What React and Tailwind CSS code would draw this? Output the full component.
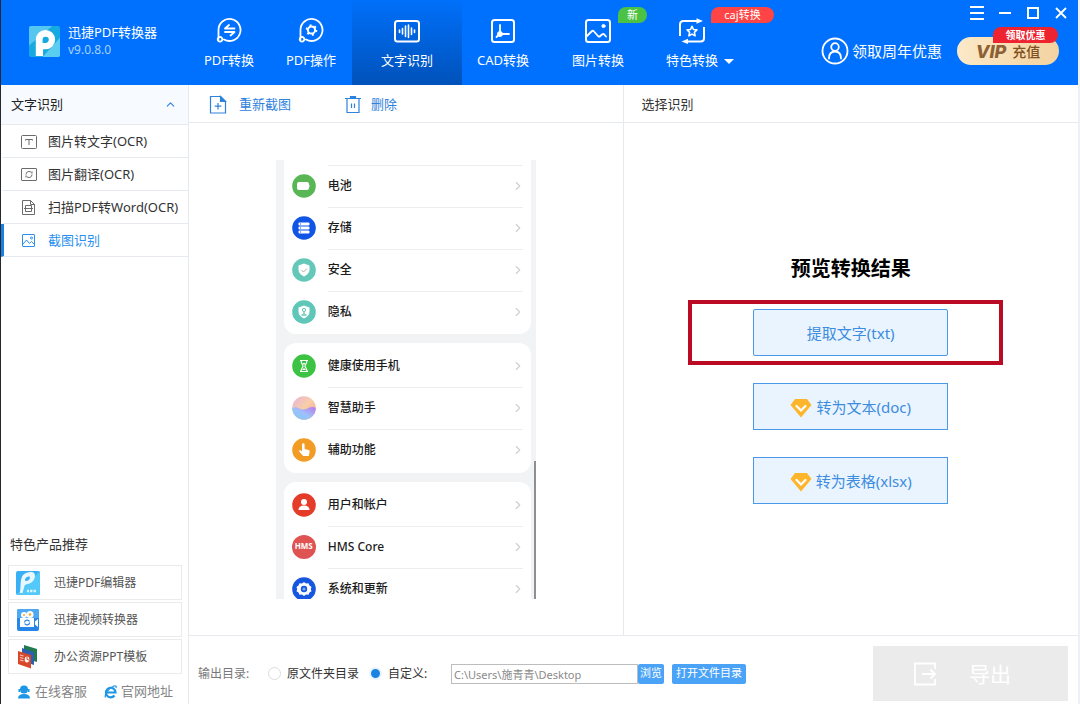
import { useState } from 'react'
import { ChevronUp, ChevronRight } from 'lucide-react'

const Svg = ({ size = 26, children, className = '' }) => (
  <svg
    width={size}
    height={size}
    viewBox="0 0 26 26"
    fill="none"
    stroke="currentColor"
    strokeWidth="2"
    strokeLinecap="round"
    strokeLinejoin="round"
    className={`shrink-0 ${className}`}
    aria-hidden="true"
  >
    {children}
  </svg>
)

const ConvertIcon = () => (
  <Svg>
    <path strokeWidth="1.800" d="M2.500 21V12A11 11 0 1 1 8 21.500M2.500 19.500a2.300 2.300 0 1 0 3 0c-.6-.6-2-.8-3 0z" />
    <path strokeWidth="1.800" d="M18.500 10.500H9l4-3.500M9 14h9.500l-4 3.500" />
  </Svg>
)

const OperateIcon = () => (
  <Svg>
    <path strokeWidth="1.800" d="M2.500 21V12A11 11 0 1 1 8 21.500M2.500 19.500a2.300 2.300 0 1 0 3 0c-.6-.6-2-.8-3 0z" />
    <circle cx="13.500" cy="12" r="3.600" />
    <circle cx="13.500" cy="12" r="5" strokeDasharray="2 3.236" strokeLinecap="butt" strokeWidth="1.600" />
  </Svg>
)

const OcrIcon = () => (
  <Svg>
    <rect x="1" y="3" width="24" height="20.500" rx="2.500" />
    <path strokeWidth="1.600" d="M5.500 12v2.500M8.500 10.500v5.500M11.500 8v10.500M14.500 7v12.500M17.500 10v6.500M20.500 12v2.500" />
  </Svg>
)

const CadIcon = () => (
  <Svg>
    <rect x="2" y="2" width="22" height="22" rx="2.500" />
    <path strokeWidth="1.800" d="M10 7v9h9M6.500 19l3-3" />
    <circle cx="10" cy="16" r="2.500" fill="currentColor" strokeWidth="1" />
  </Svg>
)

const ImageIcon = () => (
  <Svg>
    <rect x="1" y="2" width="24" height="22" rx="2.500" />
    <path d="M2 18l4.500-4.500c1-1 1.700-1 2.500 0l4 4.500c.8.800 1.500.800 2.300 0l1.700-1.500c.8-.7 1.600-.7 2.300 0l1.700 2" strokeWidth="1.800" />
    <circle cx="18.500" cy="8" r="1.600" fill="currentColor" strokeWidth="1" />
  </Svg>
)

const SpecialIcon = () => (
  <Svg>
    <path strokeLinecap="butt" d="M1 18V6.500Q1 3 4.500 3H19M25 9v11.500Q25 23.500 21.500 23.500H7" />
    <path d="M17.500.300L24 3l-6.500 2.700zM9 20.800l-6.500 2.700L9 26z" fill="currentColor" stroke="none" />
    <path strokeWidth="1.600" d="M13 8.300l1.500 3.200 3.400.4-2.500 2.400.7 3.500-3.100-1.700-3.100 1.700.7-3.500-2.500-2.400 3.400-.4z" />
  </Svg>
)

const navItems = [
  { label: 'PDF转换', icon: ConvertIcon, width: 'w-[82px]' },
  { label: 'PDF操作', icon: OperateIcon, width: 'w-[82px]' },
  { label: '文字识别', icon: OcrIcon, width: 'w-[110px]' },
  { label: 'CAD转换', icon: CadIcon, width: 'w-[82px]' },
  { label: '图片转换', icon: ImageIcon, width: 'w-[108px]', badge: '新', badgeClass: 'bg-[#4cc244] left-[74px] w-[29px]' },
  { label: '特色转换', icon: SpecialIcon, width: 'w-20', badge: 'caj转换', badgeClass: 'bg-[#fe4444] left-[59px] w-[63px]' },
]

const TextImageIcon = () => (
  <svg width="16" height="16" viewBox="0 0 16 16" fill="none" stroke="#6b6b6b" aria-hidden="true">
    <rect x=".5" y="1.500" width="15" height="13" rx="1" />
    <path d="M4.500 6.500v-1h7v1M8 5.500V11" />
  </svg>
)

const TranslateIcon = () => (
  <svg width="16" height="16" viewBox="0 0 16 16" fill="none" stroke="#6b6b6b" aria-hidden="true">
    <rect x=".5" y="1.500" width="15" height="12" rx=".5" />
    <path d="M5 7.500a3 3 0 0 1 5.500-1.700M11 7.500a3 3 0 0 1-5.500 1.700M11 4.500v2M5 10.500v-2" />
  </svg>
)

const ScanIcon = () => (
  <svg width="16" height="16" viewBox="0 0 16 16" fill="none" stroke="#6b6b6b" aria-hidden="true">
    <path d="M1.500.500h8l4 4v10h-12zM9.500.500v4h4" />
    <path d="M4.500 5.500h6v6h-6zM3 8.500h9" />
  </svg>
)

const ShotIcon = () => (
  <svg width="16" height="16" viewBox="0 0 16 16" fill="none" stroke="currentColor" aria-hidden="true">
    <rect x="1.500" y="1.500" width="12" height="12" rx=".5" />
    <path d="M2 11l3.500-4 3 3.500 2-2 3 3" />
    <circle cx="10.500" cy="5" r="1" />
  </svg>
)

const sideItems = [
  { label: '图片转文字(OCR)', icon: TextImageIcon },
  { label: '图片翻译(OCR)', icon: TranslateIcon },
  { label: '扫描PDF转Word(OCR)', icon: ScanIcon },
  { label: '截图识别', icon: ShotIcon },
]

const EditorLogo = () => (
  <svg width="26" height="26" viewBox="0 0 26 26" aria-hidden="true">
    <rect x="1" y="1" width="24" height="24" rx="2" fill="#39b0f5" />
    <path d="M1 25L25 1v22a2 2 0 0 1-2 2z" fill="#54c8f8" />
    <path fillRule="evenodd" fill="#e9f8ff" d="M5 23C6 15 5 9 8 5c3-3 9-4 11-2 2.500 3 0 10-6 11-2 .5-3 .5-3.500 2L7.500 23zM12 7c-2 1-2.500 3-1.500 4 2 .5 4.500-1.500 4.500-3.500C15 6 13 6.500 12 7z" />
    <path d="M12 21h2m1 0h2.500m1 0h2.500" stroke="#d9f3ff" strokeWidth="2.500" />
  </svg>
)

const VideoLogo = () => (
  <svg width="26" height="26" viewBox="0 0 26 26" aria-hidden="true">
    <rect x="2" y="2" width="22" height="22" rx="2" fill="#2585e8" />
    <path d="M2 4a2 2 0 0 1 2-2h18a2 2 0 0 1 2 2v7H2z" fill="#4ea9f2" />
    <circle cx="9" cy="8" r="3" fill="#fff" />
    <circle cx="15" cy="7.500" r="3.500" fill="#fff" />
    <circle cx="15" cy="7.500" r="1.300" fill="#f6a531" />
    <circle cx="9" cy="8" r="1" fill="#f6a531" />
    <path d="M5 11h14v9H5zM20 14.500l3-2.500v8l-3-2.500z" fill="#fff" />
    <path d="M9.500 15.500a2.700 2.700 0 0 1 5-1M14.700 15.500a2.700 2.700 0 0 1-5 1" fill="none" stroke="#2585e8" strokeWidth="1.300" />
  </svg>
)

const PptLogo = () => (
  <svg width="26" height="26" viewBox="0 0 26 26" aria-hidden="true">
    <path d="M9 1l13 4v13L9 14z" fill="#1f7a4d" />
    <path d="M7 4l12 4v13L7 17z" fill="#2c5fae" />
    <path d="M3 7l13 4v13.500L3 20z" fill="#d9472b" />
    <path d="M5 11l3.500 1M5 13.500l3.500 1M5 16l3.500 1" stroke="#f7c6b8" strokeWidth="1.300" />
    <ellipse cx="12" cy="15.500" rx="2.300" ry="3" fill="#fff" />
    <path d="M12 12.500v3l2 .5" stroke="#d9472b" fill="none" />
  </svg>
)

const products = [
  { label: '迅捷PDF编辑器', icon: EditorLogo },
  { label: '迅捷视频转换器', icon: VideoLogo },
  { label: '办公资源PPT模板', icon: PptLogo },
]

const Disc = ({ color, children }) => (
  <svg width="24" height="24" viewBox="0 0 24 24" className="shrink-0" aria-hidden="true">
    <circle cx="12" cy="12" r="11.800" fill={color} />
    {children}
  </svg>
)

const BatteryDisc = () => (
  <Disc color="#59b655">
    <rect x="5" y="8" width="12" height="8" rx="2" fill="#fff" />
    <path d="M17.500 10.500q1.500 1.500 0 3z" fill="#fff" />
  </Disc>
)

const StorageDisc = () => (
  <Disc color="#1155e6">
    <rect x="6.500" y="6.500" width="11" height="3" rx="1" fill="#fff" />
    <rect x="6.500" y="10.500" width="11" height="3" rx="1" fill="#fff" />
    <rect x="6.500" y="14.500" width="11" height="3" rx="1" fill="#fff" />
    <path d="M8 8h1M8 12h1M8 16h1" stroke="#1155e6" />
  </Disc>
)

const ShieldDisc = () => (
  <Disc color="#64c8b9">
    <path d="M12 5.500l5.500 2v4.500c0 3-2.500 5-5.500 6.500-3-1.500-5.500-3.500-5.500-6.500V7.500z" fill="#fff" />
    <path d="M9.500 12l2 2 3.500-3.500" stroke="#b5aaa8" fill="none" />
  </Disc>
)

const PrivacyDisc = () => (
  <Disc color="#5fc6b8">
    <path d="M12 5.500l5.500 2v4.500c0 3-2.500 5-5.500 6.500-3-1.500-5.500-3.500-5.500-6.500V7.500z" fill="#fff" />
    <circle cx="12" cy="10" r="1.600" fill="none" stroke="#5fc6b8" />
    <path d="M12 11.500v2.500M9.500 15h5" stroke="#5fc6b8" strokeWidth="1.300" />
  </Disc>
)

const HealthDisc = () => (
  <Disc color="#3cc343">
    <path d="M8 6.500h8M8 17.500h8M9 6.500c0 3 2 4 2 5.500s-2 2.500-2 5.500M15 6.500c0 3-2 4-2 5.500s2 2.500 2 5.500" stroke="#fff" strokeWidth="1.200" fill="none" />
    <path d="M10.500 9h3L12 11zM10 16l2-2 2 2z" fill="#fff" />
  </Disc>
)

const AssistDisc = () => (
  <svg width="24" height="24" viewBox="0 0 24 24" className="shrink-0" aria-hidden="true">
    <defs>
      <linearGradient id="orbTop" x1="0" y1="0" x2="1" y2="1">
        <stop offset="0" stopColor="#e8b3dc" />
        <stop offset=".5" stopColor="#f8cfa8" />
        <stop offset="1" stopColor="#f49a96" />
      </linearGradient>
      <linearGradient id="orbBottom" x1="1" y1="0" x2="0" y2="1">
        <stop offset="0" stopColor="#b877ee" />
        <stop offset=".5" stopColor="#9fc0fb" />
        <stop offset="1" stopColor="#79cbf5" />
      </linearGradient>
    </defs>
    <circle cx="12" cy="12" r="11.800" fill="url(#orbTop)" />
    <path d="M.2 12c5-3 8 3 14 1 4-1.500 6-3 9.600-1A11.800 11.800 0 0 1 .2 12z" fill="url(#orbBottom)" />
  </svg>
)

const TouchDisc = () => (
  <Disc color="#f29c26">
    <path d="M10 6.500a1.300 1.300 0 0 1 2.600 0V11l4 1c1 .3 1.200 1 1 2l-.8 4h-5.600l-4-4.500c-.6-.9.500-1.800 1.500-1l1.300 1z" fill="#fff" />
  </Disc>
)

const UserDisc = () => (
  <Disc color="#e43c28">
    <circle cx="12" cy="9" r="3" fill="#fff" />
    <path d="M6.500 17c0-3 2-4.500 5.500-4.500s5.500 1.500 5.500 4.500z" fill="#fff" />
  </Disc>
)

const HmsDisc = () => (
  <span className="flex size-6 shrink-0 items-center justify-center rounded-full bg-[#e05353] text-[8px] font-bold text-white">
    HMS
  </span>
)

const SystemDisc = () => (
  <Disc color="#1557e0">
    <path d="M12 5l2 1.500 2.500-.3 1 2.300 2 1.500-.7 2 .7 2.200-2 1.300-1 2.300-2.500-.3L12 19l-2-1.500-2.500.3-1-2.300-2-1.300.7-2.200-.7-2 2-1.500 1-2.300 2.500.3z" fill="#fff" />
    <circle cx="12" cy="12" r="3.200" fill="#1557e0" />
    <circle cx="12" cy="12" r="1.600" fill="#7fa6f3" />
  </Disc>
)

const phoneGroups = [
  [
    { label: '电池', icon: BatteryDisc },
    { label: '存储', icon: StorageDisc },
    { label: '安全', icon: ShieldDisc },
    { label: '隐私', icon: PrivacyDisc },
  ],
  [
    { label: '健康使用手机', icon: HealthDisc },
    { label: '智慧助手', icon: AssistDisc },
    { label: '辅助功能', icon: TouchDisc },
  ],
  [
    { label: '用户和帐户', icon: UserDisc },
    { label: 'HMS Core', icon: HmsDisc },
    { label: '系统和更新', icon: SystemDisc },
  ],
]

const Gem = () => (
  <svg width="22" height="20" viewBox="0 0 22 20" className="mr-1 shrink-0" aria-hidden="true">
    <path d="M5 1h12l4.500 6L11 19.500.500 7z" fill="#fdb62b" />
    <path d="M6.500 8l4.500 4.500L15.500 8" fill="none" stroke="#fff" strokeWidth="2.200" strokeLinecap="round" />
  </svg>
)

function Header() {
  return (
    <header className="flex h-[85px] shrink-0 bg-[#0071ff] text-white">
      <div className="flex w-[187px] shrink-0 items-center pb-[3px] pl-7">
        <svg width="31" height="31" viewBox="0 0 32 32" aria-hidden="true">
          <rect width="32" height="32" rx="2" fill="#17a9e0" />
          <path d="M0 2a2 2 0 0 1 2-2h22L0 20z" fill="#55c6f0" />
          <path d="M32 12v18a2 2 0 0 1-2 2H14z" fill="#5bcdf0" />
          <path fillRule="evenodd" fill="#fff" d="M7 31V14a10 10 0 1 1 10 10H14.500V31zM14 17.500h2.500a3.200 3.200 0 1 0-2.500-3z" />
          <circle cx="17" cy="14.500" r="1.800" fill="#17a9e0" />
        </svg>
        <div className="ml-2 text-[13px] leading-[18px]">
          <h1>迅捷PDF转换器</h1>
          <p className="text-xs leading-[18px] text-[#a5d2ff]">v9.0.8.0</p>
        </div>
      </div>

      <nav className="flex shrink-0">
        {navItems.map(({ label, icon: Icon, width, badge, badgeClass }, i) => (
          <button
            key={label}
            type="button"
            className={`relative flex flex-col items-center gap-1.5 pt-[18px] text-[13px] leading-5 ${width} ${
              i === 2 ? 'bg-linear-to-b from-[#0070fa] to-[#0052ba]' : ''
            }`}
          >
            <Icon />
            <span>{label}</span>
            {badge && (
              <span className={`absolute top-[7px] rounded-tl-lg rounded-r-lg text-[11px] leading-4 ${badgeClass}`}>
                {badge}
              </span>
            )}
          </button>
        ))}
        <button type="button" aria-label="更多" className="-ml-2 flex items-end pb-[18px]">
          <svg width="10" height="10" viewBox="0 0 10 10" aria-hidden="true">
            <path d="M0 2h10L5 7z" fill="#fff" />
          </svg>
        </button>
      </nav>

      <div className="ml-auto flex shrink-0 flex-col items-end pr-[10px]">
        <div className="flex h-[26px] items-center gap-[14px]">
          <button type="button" aria-label="菜单">
            <svg width="14" height="14" viewBox="0 0 14 14" stroke="#fff" strokeWidth="2">
              <path d="M0 1h14M0 7h14M0 13h14" />
            </svg>
          </button>
          <button type="button" aria-label="最小化">
            <svg width="14" height="14" viewBox="0 0 14 14" stroke="#fff" strokeWidth="2">
              <path d="M1 7h12" />
            </svg>
          </button>
          <button type="button" aria-label="最大化">
            <svg width="14" height="14" viewBox="0 0 14 14" fill="none" stroke="#fff" strokeWidth="2">
              <rect x="2" y="2" width="10" height="10" />
            </svg>
          </button>
          <button type="button" aria-label="关闭">
            <svg width="14" height="14" viewBox="0 0 14 14" stroke="#fff" strokeWidth="1.800">
              <path d="M2 2l10 10M12 2L2 12" />
            </svg>
          </button>
        </div>
        <div className="mr-[9px] mt-[11px] flex items-center">
          <a href="#account" className="flex items-center gap-[3px] text-[15px] leading-5">
            <svg width="28" height="28" viewBox="0 0 28 28" fill="none" stroke="#fff" strokeWidth="1.800" aria-hidden="true">
              <circle cx="14" cy="14" r="12.500" />
              <circle cx="14" cy="10" r="3.800" />
              <path d="M8 21.500c0-4.500 2.500-7 6-7s6 2.500 6 7" strokeLinecap="round" />
            </svg>
            领取周年优惠
          </a>
          <button
            type="button"
            className="relative ml-[15px] flex h-7 w-[102px] items-center justify-center gap-1.5 rounded-full bg-linear-to-r from-[#fce9c8] to-[#f3d3a0] text-[#80511f]"
          >
            <span className="font-[Inter,sans-serif] text-[18px] font-extrabold italic text-[#8c6134]">VIP</span>
            <span className="text-[14px] font-medium">充值</span>
            <span className="absolute -top-[10px] right-px w-[65px] rounded-tl-lg rounded-r-lg bg-[#ee2330] text-[10px] font-bold leading-4 text-white">
              领取优惠
            </span>
          </button>
        </div>
      </div>
    </header>
  )
}

function Sidebar() {
  const [active, setActive] = useState(3)

  return (
    <aside className="flex w-[188px] shrink-0 flex-col border-r border-[#e6e9ee] bg-white">
      <button
        type="button"
        className="flex h-10 shrink-0 items-center justify-between border-b border-[#e6e9ee] bg-[#f7faff] pl-[10px] pr-[11px] text-[13px] text-[#222]"
      >
        文字识别
        <ChevronUp size={13} className="text-[#2b86e3]" />
      </button>
      {sideItems.map(({ label, icon: Icon }, i) => (
        <button
          key={label}
          type="button"
          onClick={() => setActive(i)}
          className={`flex h-[33px] shrink-0 items-center gap-[11px] whitespace-nowrap border-b border-l-3 border-b-[#e6e9ee] pl-[17px] pt-0.5 text-[13px] ${
            i === active ? 'border-l-[#1a7fe0] text-[#2b8ff0]' : 'border-l-transparent text-[#333]'
          }`}
        >
          <Icon />
          {label}
        </button>
      ))}

      <div className="mt-auto pl-[7px] pr-1.5">
        <h2 className="pl-0.5 text-[13px] leading-5 text-[#333]">特色产品推荐</h2>
        <ul className="mt-[11px] space-y-0.5">
          {products.map(({ label, icon: Icon }) => (
            <li key={label}>
              <a href="#product" className="flex h-[35px] items-center gap-[13px] border border-[#ebebeb] pl-1.5 pt-px text-xs text-[#555]">
                <Icon />
                {label}
              </a>
            </li>
          ))}
        </ul>
        <div className="flex h-[30px] items-center gap-[17px] pl-[9px] pt-1.5 text-[13px] text-[#858585]">
          <a href="#support" className="flex items-center gap-1">
            <svg width="14" height="14" viewBox="0 0 14 14" fill="#1d96e8" aria-hidden="true">
              <circle cx="7" cy="4.500" r="4" />
              <path d="M1 13.500c0-3 2-4.500 6-4.500s6 1.500 6 4.500zM1.500 4h1.500v3H1.500zM11 4h1.500v3H11z" />
            </svg>
            在线客服
          </a>
          <a href="#site" className="flex items-center gap-1">
            <svg width="13" height="14" viewBox="0 0 13 14" fill="none" stroke="#1d96e8" aria-hidden="true">
              <path d="M2 7.500h9.500a4.800 4.800 0 1 0-1 3" strokeWidth="2.200" />
              <path d="M1.500 12.500C0 10 5 2.500 10 1c2-.6 2.500.5 2 2" strokeWidth="1.200" />
            </svg>
            官网地址
          </a>
        </div>
      </div>
    </aside>
  )
}

function PhoneShot() {
  return (
    <div className="flex h-[439px] w-[260px] flex-col gap-[9px] overflow-hidden bg-[#f1f3f5] pl-2 text-xs font-medium text-[#1c1c1c]">
      {phoneGroups.map((rows, g) => (
        <ul key={rows[0].label} className={`mr-[5px] shrink-0 bg-white px-2 ${g === 0 ? 'rounded-b-xl pb-px pt-[5px]' : 'rounded-xl py-0.5'}`}>
          {rows.map(({ label, icon: Icon }, i) => (
            <li key={label} className="flex h-[42px] items-center gap-3">
              <Icon />
              <div
                className={`flex h-full flex-1 items-center justify-between border-t ${
                  i > 0 || g === 0 ? 'border-[#ededed]' : 'border-transparent'
                }`}
              >
                {label}
                <ChevronRight size={14} strokeWidth={2} className="-mr-0.5 text-[#cfcfcf]" />
              </div>
            </li>
          ))}
        </ul>
      ))}
    </div>
  )
}

const actionClass = 'flex h-[47px] w-[195px] items-center justify-center border border-[#4a98ea] bg-[#eaf4fe] pt-0.5 text-[15px] text-[#3c8ce0]'

function Workspace() {
  return (
    <div className="flex min-h-0 flex-1">
      <section className="flex min-w-0 flex-[434] flex-col border-r border-[#e6e9ee]">
        <div className="flex h-[38px] shrink-0 items-center gap-[53px] border-b border-[#e6e9ee] pl-5 pt-0.5 text-[13px] text-[#2f82dc]">
          <button type="button" className="flex items-center gap-3">
            <svg width="18" height="20" viewBox="0 0 18 20" fill="none" stroke="currentColor" strokeWidth="1.200" aria-hidden="true">
              <path d="M1.500 1.500h10l5 5v11.500h-15z" />
              <path d="M11.500 1.500v5h5z" fill="currentColor" />
              <path d="M9 8v6.500M5.700 11.200h6.600" />
            </svg>
            重新截图
          </button>
          <button type="button" className="flex items-center gap-[9px]">
            <svg width="18" height="20" viewBox="0 0 18 20" fill="none" stroke="currentColor" strokeWidth="1.200" aria-hidden="true">
              <path d="M1 3.500h16M3 3.500v14h12V3.500M7.500 8.500v4.500M10.500 8.500v4.500" />
              <path d="M6.500 1.500h5v2h-5z" fill="currentColor" />
            </svg>
            删除
          </button>
        </div>
        <div className="flex flex-1 items-center justify-center">
          <div className="relative">
            <PhoneShot />
            <span className="absolute bottom-0 right-0 h-[138px] w-0.5 bg-[#8d8f91]" />
          </div>
        </div>
      </section>

      <section className="flex min-w-0 flex-[455] flex-col">
        <h2 className="flex h-[38px] shrink-0 items-center border-b border-[#e6e9ee] pl-[18px] pt-0.5 text-[13px] text-[#333]">选择识别</h2>
        <div className="flex flex-1 flex-col items-center justify-center gap-[27px] pt-0.5">
          <h3 className="text-xl font-bold leading-[26px] text-black">预览转换结果</h3>
          <div className="relative">
            <button type="button" className={`${actionClass} rounded-xs`}>提取文字(txt)</button>
            {/* highlight frame */}
            <span className="pointer-events-none absolute -bottom-[9px] -left-[65px] -right-[55px] -top-[9px] border-4 border-[#bb0a24]" />
          </div>
          <button type="button" className={actionClass}>
            <Gem />
            转为文本(doc)
          </button>
          <button type="button" className={actionClass}>
            <Gem />
            转为表格(xlsx)
          </button>
        </div>
      </section>
    </div>
  )
}

const radioClass =
  'size-[13px] appearance-none rounded-full border border-[#dcdcdc] bg-white checked:border-2 checked:border-[#e8f3fd] checked:bg-[#1b82e2]'

function OutputBar() {
  const [mode, setMode] = useState('custom')
  const [path, setPath] = useState('C:\\Users\\施青青\\Desktop')

  return (
    <footer className="flex h-[69px] shrink-0 items-center border-t border-[#e6e9ee] pl-[9px] pr-[10px] pt-[7px] text-xs text-[#333]">
      <span className="w-[70px] text-[#777]">输出目录:</span>
      <label className="flex items-center gap-1.5">
        <input type="radio" name="output" className={radioClass} checked={mode === 'source'} onChange={() => setMode('source')} />
        原文件夹目录
      </label>
      <label className="ml-[10px] flex w-[82px] items-center gap-1.5">
        <input type="radio" name="output" className={radioClass} checked={mode === 'custom'} onChange={() => setMode('custom')} />
        自定义:
      </label>
      <input
        type="text"
        aria-label="输出路径"
        value={path}
        onChange={(e) => setPath(e.target.value)}
        className="h-5 w-[187px] border border-[#bdbdbd] px-0.5 text-[11px] text-[#8a8a8a]"
      />
      <button type="button" className="h-5 w-[26px] rounded-xs bg-[#4ba3f8] text-[11px] text-white">浏览</button>
      <button type="button" className="ml-2 h-5 w-[74px] rounded-xs bg-[#4ba3f8] text-[11px] text-white">打开文件目录</button>
      <button
        type="button"
        className="ml-auto flex h-[55px] w-[195px] items-center gap-8 bg-[#ebebeb] pl-10 text-[21px] text-white"
      >
        <svg width="24" height="24" viewBox="0 0 24 24" fill="none" stroke="currentColor" strokeWidth="1.800" aria-hidden="true">
          <path d="M22 7V1.500H2v21h20V17M9 12h13M17.500 7.500L22 12l-4.500 4.500" />
        </svg>
        导出
      </button>
    </footer>
  )
}

export default function App() {
  return (
    <div className="flex min-h-screen flex-col border-l border-r-2 border-l-[#26282e] border-r-[#edf0f4] bg-white font-['Noto_Sans','Noto_Sans_CJK_SC',sans-serif]">
      <Header />
      <div className="flex flex-1">
        <Sidebar />
        <main className="flex min-w-0 flex-1 flex-col">
          <Workspace />
          <OutputBar />
        </main>
      </div>
    </div>
  )
}
